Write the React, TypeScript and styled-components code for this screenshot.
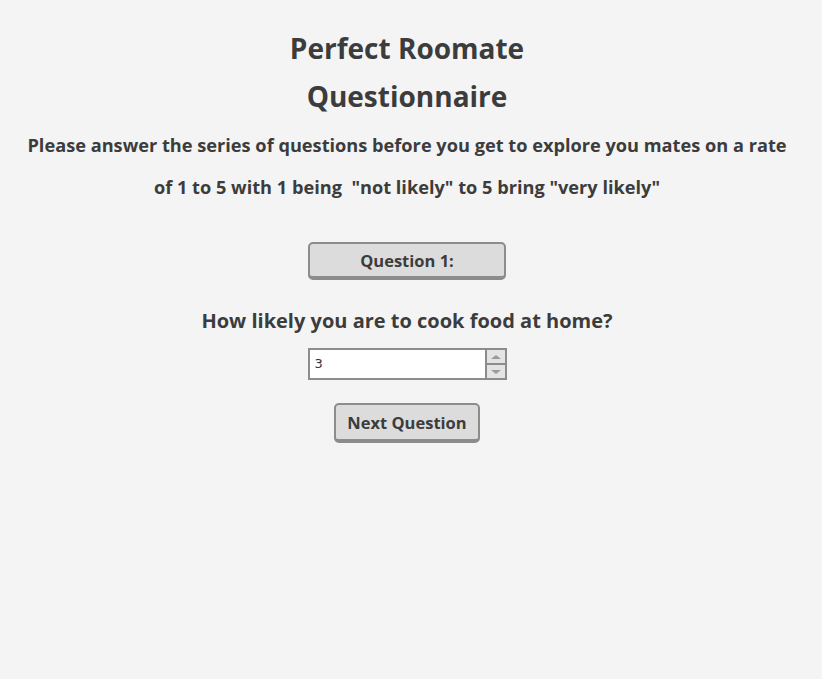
import React from "react";
import styled, { createGlobalStyle } from "styled-components";

const Global = createGlobalStyle`
  html, body { margin: 0; padding: 0; background: #f4f4f4; }
  body { font-family: "Open Sans", "Lato", sans-serif; color: #3c3c3c; }
`;

const Page = styled.main`
  display: flex;
  flex-direction: column;
  align-items: center;
  padding: 24px 8px 0 0;
  text-align: center;
`;

const Title = styled.h1`
  margin: 0;
  font-size: 28px;
  font-weight: 700;
  line-height: 48px;
`;

const Intro = styled.p`
  margin: 4px 0 0;
  font-size: 18.2px;
  font-weight: 700;
  line-height: 42px;
`;

const Button = styled.button<{ $w: number; $h: number }>`
  width: ${(p) => p.$w}px;
  height: ${(p) => p.$h}px;
  background: #dcdcdc;
  border: 2px solid #8c8c8c;
  border-bottom-width: 4px;
  border-radius: 5px;
  font-family: inherit;
  font-size: 16.5px;
  font-weight: 700;
  color: #3c3c3c;
  padding: 0;
  cursor: pointer;
`;

const Question = styled.h2`
  margin: 0;
  font-size: 20px;
  font-weight: 700;
  line-height: 28px;
`;

const NumberBox = styled.div`
  display: flex;
  width: 199px;
  height: 32px;
  box-sizing: border-box;
  border: 2px solid #8c8c8c;
  background: #fff;
`;

const Value = styled.span`
  flex: 1;
  text-align: left;
  padding-left: 5px;
  font-size: 13px;
  line-height: 28px;
  font-family: "DejaVu Sans", sans-serif;
  color: #333;
`;

const Spin = styled.div`
  width: 18px;
  display: flex;
  flex-direction: column;
  border-left: 2px solid #8c8c8c;
  background: #e4e4e4;
`;

const SpinHalf = styled.div<{ $down?: boolean }>`
  flex: 1;
  display: flex;
  align-items: center;
  justify-content: center;
  border-top: ${(p) => (p.$down ? "2px solid #8c8c8c" : "none")};
  &::after {
    content: "";
    border-left: 5px solid transparent;
    border-right: 5px solid transparent;
    ${(p) => (p.$down ? "border-top: 4px solid #9a9a9a;" : "border-bottom: 4px solid #9a9a9a;")}
  }
`;

const Gap = styled.div<{ $h: number }>`
  height: ${(p) => p.$h}px;
`;

export default function App() {
  return (
    <>
      <Global />
      <Page>
        <Title>Perfect Roomate</Title>
        <Title>Questionnaire</Title>
        <Intro>
          Please answer the series of questions before you get to explore you mates on a rate
          <br />
          of 1 to 5 with 1 being&nbsp; "not likely" to 5 bring "very likely"
        </Intro>
        <Gap $h={34} />
        <Button $w={198} $h={38}>Question 1:</Button>
        <Gap $h={27} />
        <Question>How likely you are to cook food at home?</Question>
        <Gap $h={13} />
        <NumberBox>
          <Value>3</Value>
          <Spin>
            <SpinHalf />
            <SpinHalf $down />
          </Spin>
        </NumberBox>
        <Gap $h={23} />
        <Button $w={146} $h={40}>Next Question</Button>
      </Page>
    </>
  );
}
